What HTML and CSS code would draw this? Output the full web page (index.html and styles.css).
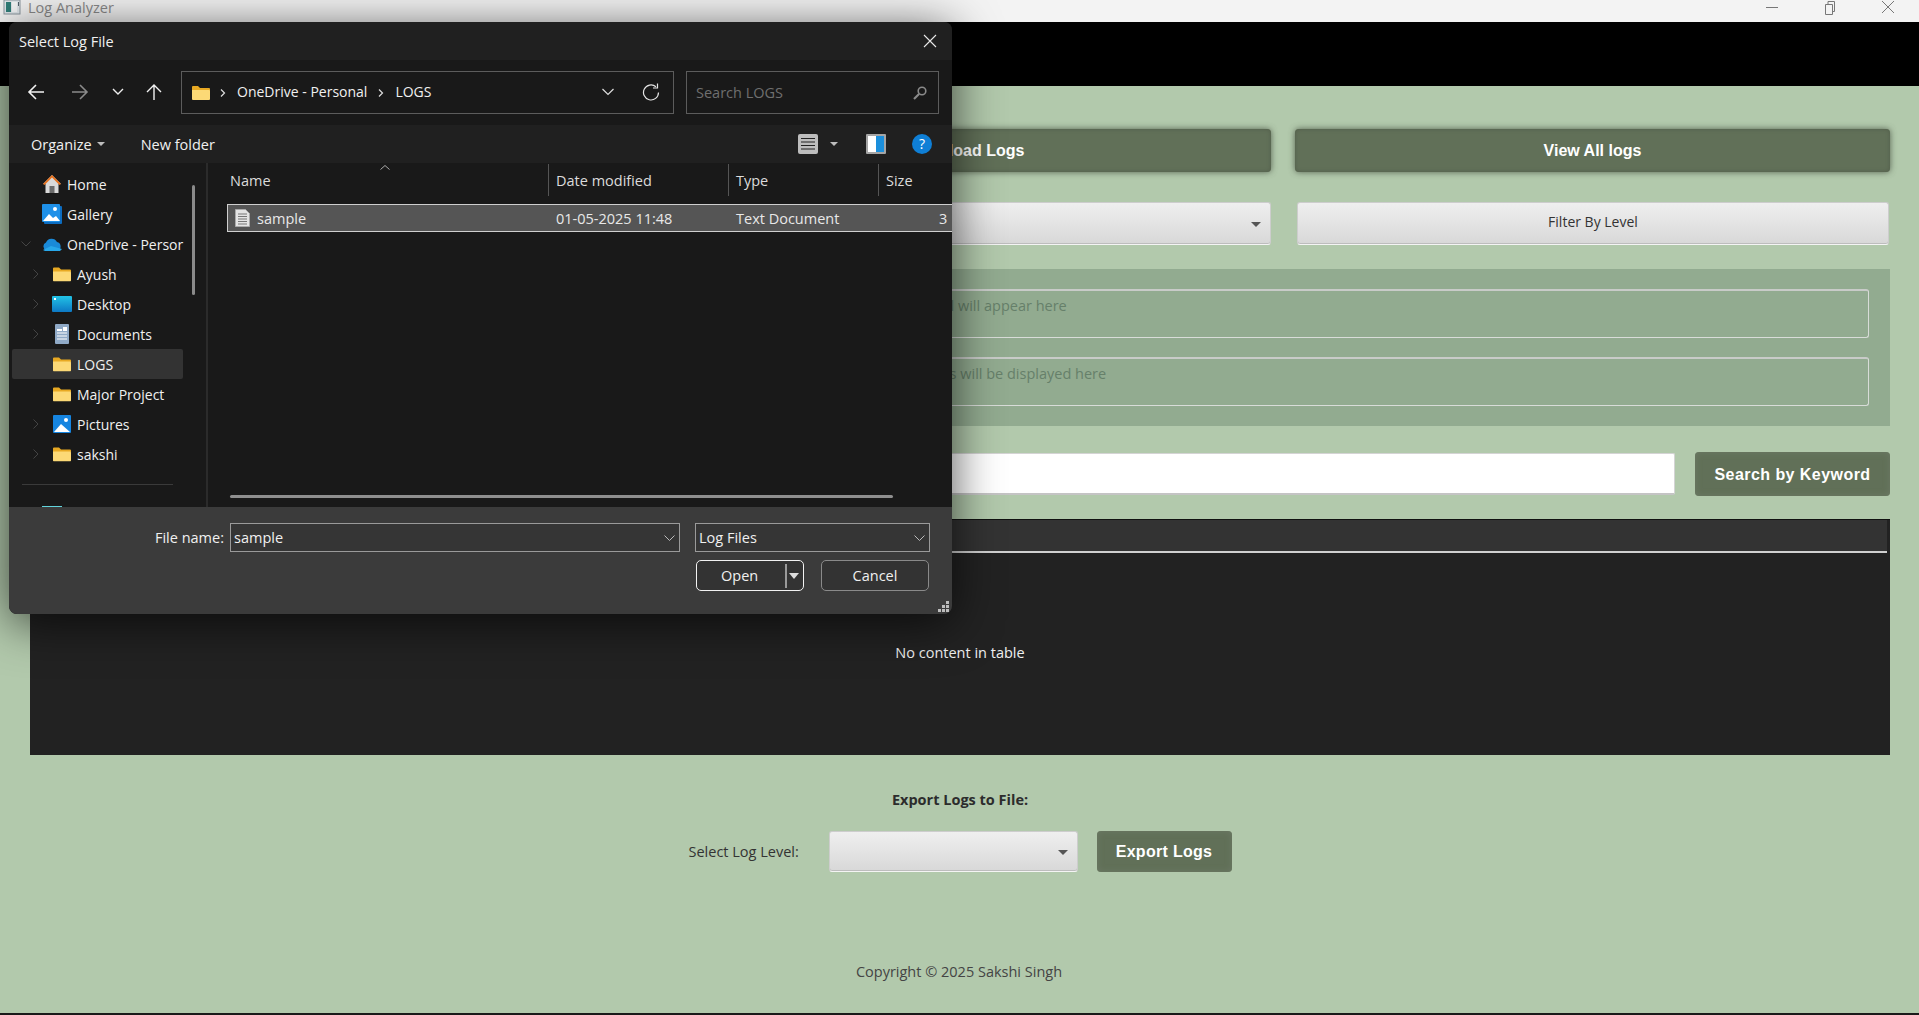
FILE: index.html
```html
<!DOCTYPE html>
<html lang="en">
<head>
    <meta charset="UTF-8">
    <title>Log Analyzer</title>
    <link rel="stylesheet" href="styles.css">
</head>
<body>
    <div class="titlebar">
        <svg class="app-icon" width="18" height="18" viewBox="0 0 18 18"><rect x="1" y="0" width="16" height="14" fill="#dfe6ea" stroke="#8c98a0"/><rect x="3" y="2" width="5" height="10" fill="#2f7d78"/><rect x="9" y="2" width="5" height="10" fill="#f4f6f7"/><rect x="15" y="2" width="1" height="4" fill="#51606a"/></svg>
        <span class="app-title">Log Analyzer</span>
        <div class="win-controls">
            <svg width="16" height="16" viewBox="0 0 16 16"><path d="M2 7.500h12" stroke="#777" fill="none"/></svg>
            <svg width="16" height="16" viewBox="0 0 16 16"><path d="M3.500 4.500h7v10h-7zM6 4.500v-3h6.500v10h-2" stroke="#777" fill="none"/></svg>
            <svg width="16" height="16" viewBox="0 0 16 16"><path d="M2 1l12 12M14 1L2 13" stroke="#777" fill="none"/></svg>
        </div>
    </div>
    <div class="app-header"></div>

    <main class="app-main">
        <div class="action-row">
            <button class="btn-dark"></button>
            <button class="btn-dark">Upload Logs</button>
            <button class="btn-dark">View All logs</button>
        </div>
        <div class="filter-row">
            <div class="combo"><span class="combo-arrow"></span></div>
            <button class="btn-light">Filter By Level</button>
        </div>
        <section class="output-panel">
            <div class="output-box">Detail will appear here</div>
            <div class="output-box">Errors will be displayed here</div>
        </section>
        <div class="search-row">
            <input class="search-input" type="text">
            <button class="btn-dark btn-search">Search by Keyword</button>
        </div>
        <section class="log-table">
            <div class="log-table-head"></div>
            <div class="log-table-body">No content in table</div>
        </section>
        <h3 class="export-title">Export Logs to File:</h3>
        <div class="export-row">
            <span class="export-label">Select Log Level:</span>
            <div class="combo combo-small"><span class="combo-arrow"></span></div>
            <button class="btn-dark btn-export">Export Logs</button>
        </div>
        <footer class="copyright">Copyright © 2025 Sakshi Singh</footer>
    </main>
    <div class="bottom-edge"></div>

    <!-- file picker lying over the app -->
    <div class="dialog">
        <div class="dlg-title">
            <span>Select Log File</span>
            <svg width="14" height="14" viewBox="0 0 14 14"><path d="M1 1l12 12M13 1L1 13" stroke="#e8e8e8" stroke-width="1.100" fill="none"/></svg>
        </div>

        <div class="dlg-nav">
            <div class="nav-buttons">
                <svg class="nav-back" width="18" height="18" viewBox="0 0 18 18"><path d="M17 9H2M9 2L2 9l7 7" stroke="#f2f2f2" stroke-width="1.600" fill="none"/></svg>
                <svg class="nav-fwd" width="18" height="18" viewBox="0 0 18 18"><path d="M1 9h15M9 2l7 7-7 7" stroke="#8a8a8a" stroke-width="1.600" fill="none"/></svg>
                <svg class="nav-recent" width="12" height="8" viewBox="0 0 12 8"><path d="M1 1l5 5 5-5" stroke="#eee" stroke-width="1.400" fill="none"/></svg>
                <svg class="nav-up" width="16" height="18" viewBox="0 0 16 18"><path d="M8 17V2M1 9l7-7 7 7" stroke="#f2f2f2" stroke-width="1.400" fill="none"/></svg>
            </div>
            <div class="address">
                <svg class="folder" width="18" height="15" viewBox="0 0 18 15"><use href="#folder"/></svg>
                <svg class="crumb" width="6" height="8" viewBox="0 0 6 8"><path d="M1 0.500l3.500 3.500-3.500 3.500" stroke="#ddd" stroke-width="1.200" fill="none"/></svg>
                <span>OneDrive - Personal</span>
                <svg class="crumb" width="6" height="8" viewBox="0 0 6 8"><path d="M1 0.500l3.500 3.500-3.500 3.500" stroke="#ddd" stroke-width="1.200" fill="none"/></svg>
                <span>LOGS</span>
                <svg class="addr-drop" width="12" height="8" viewBox="0 0 12 8"><path d="M0.500 1l5.500 5.500L11.500 1" stroke="#ddd" stroke-width="1.200" fill="none"/></svg>
                <svg class="addr-refresh" width="18" height="18" viewBox="0 0 18 18"><path d="M16.500 9.500a7.500 7.500 0 1 1-2.600-5.700" stroke="#e6e6e6" stroke-width="1.200" fill="none"/><path d="M15.500 0.500v4.500h-4.500" stroke="#e6e6e6" stroke-width="1.200" fill="none"/></svg>
            </div>
            <div class="search-box">
                <span>Search LOGS</span>
                <svg width="14" height="14" viewBox="0 0 14 14"><circle cx="9" cy="5" r="3.800" stroke="#8a8a8a" stroke-width="1.600" fill="none"/><path d="M6 8l-5 5" stroke="#8a8a8a" stroke-width="2.200"/></svg>
            </div>
        </div>

        <div class="dlg-toolbar">
            <span class="tool-item">Organize<i class="caret"></i></span>
            <span class="tool-item tool-new">New folder</span>
            <div class="tool-right">
                <svg width="20" height="20" viewBox="0 0 20 20"><rect width="20" height="20" rx="2" fill="#bdbdbd"/><path d="M3 4.500h14M3 8h14M3 11.500h14M3 15h14" stroke="#222" stroke-width="1.200"/></svg>
                <i class="caret"></i>
                <svg class="tool-pane" width="20" height="20" viewBox="0 0 20 20"><rect width="20" height="20" rx="1" fill="#a5a5a5"/><rect x="2" y="2" width="8" height="16" fill="#fff"/><rect x="10" y="2" width="8" height="16" fill="#1b8fdc"/></svg>
                <svg class="tool-help" width="20" height="20" viewBox="0 0 20 20"><circle cx="10" cy="10" r="10" fill="#0f7fd6"/><text x="10" y="15" text-anchor="middle" class="help-mark">?</text></svg>
            </div>
        </div>

        <div class="dlg-body">
            <aside class="tree">
                <div class="tree-row"><svg class="tree-icon" width="20" height="20" viewBox="0 0 20 20"><path d="M10 1L1 10h2.500v9h13v-9H19z" fill="#d9d9d9"/><path d="M10 1L1 10l1.500 1L10 3.500 17.500 11l1.500-1z" fill="#e8711c"/><rect x="7.500" y="12" width="5" height="7" fill="#6b6b6b"/></svg>Home</div>
                <div class="tree-row"><svg class="tree-icon" width="20" height="20" viewBox="0 0 20 20"><rect x="2" y="2" width="18" height="18" rx="1" fill="#0c6cc0"/><rect width="18" height="18" rx="1" fill="#1e90e8"/><path d="M1 17l6-7 4 4 3-2 4 5z" fill="#fff"/><circle cx="13" cy="5" r="2" fill="#fff"/></svg>Gallery</div>
                <div class="tree-row"><svg class="tree-chev" width="10" height="6" viewBox="0 0 10 6"><path d="M0.500 0.500L5 5l4.500-4.500" stroke="#444" fill="none"/></svg><svg class="tree-icon" width="20" height="14" viewBox="0 0 20 14"><path d="M4 13a4 4 0 0 1 0-7.500A6 6 0 0 1 15 5a4.500 4.500 0 0 1 1 8.500z" fill="#1a8ad8"/><path d="M1 13l8-4 11 3-2 2H3z" fill="#28a8ea"/></svg>OneDrive - Persor</div>
                <div class="tree-row tree-sub"><svg class="tree-arrow" width="6" height="10" viewBox="0 0 6 10"><path d="M0.500 0.500L5 5 0.500 9.500" stroke="#444" fill="none"/></svg><svg class="tree-icon" width="18" height="15" viewBox="0 0 18 15"><use href="#folder"/></svg>Ayush</div>
                <div class="tree-row tree-sub"><svg class="tree-arrow" width="6" height="10" viewBox="0 0 6 10"><path d="M0.500 0.500L5 5 0.500 9.500" stroke="#444" fill="none"/></svg><svg class="tree-icon tree-wide" width="20" height="16" viewBox="0 0 20 16"><defs><linearGradient id="desk" x1="0" y1="0" x2="0" y2="1"><stop offset="0" stop-color="#22c3e6"/><stop offset="1" stop-color="#0d78c4"/></linearGradient></defs><rect width="20" height="16" rx="1" fill="url(#desk)"/><rect x="2" y="2" width="2" height="2" fill="#fff"/></svg>Desktop</div>
                <div class="tree-row tree-sub"><svg class="tree-arrow" width="6" height="10" viewBox="0 0 6 10"><path d="M0.500 0.500L5 5 0.500 9.500" stroke="#444" fill="none"/></svg><svg class="tree-icon" width="18" height="20" viewBox="0 0 18 20"><rect x="2" width="14" height="20" rx="1" fill="#8fa9c6"/><path d="M4 9h10M4 12h10M4 15h10" stroke="#fff"/><rect x="4" y="5" width="5" height="2" fill="#fff"/><rect x="10" y="3" width="4" height="4" fill="#fff"/></svg>Documents</div>
                <div class="tree-row tree-sub tree-selected"><svg class="tree-icon" width="18" height="15" viewBox="0 0 18 15"><use href="#folder"/></svg>LOGS</div>
                <div class="tree-row tree-sub"><svg class="tree-icon" width="18" height="15" viewBox="0 0 18 15"><use href="#folder"/></svg>Major Project</div>
                <div class="tree-row tree-sub"><svg class="tree-arrow" width="6" height="10" viewBox="0 0 6 10"><path d="M0.500 0.500L5 5 0.500 9.500" stroke="#444" fill="none"/></svg><svg class="tree-icon" width="18" height="18" viewBox="0 0 18 18"><rect width="18" height="18" rx="1" fill="#1685e0"/><path d="M1 17l7-8 9 8z" fill="#fff"/><circle cx="13" cy="5" r="2" fill="#fff"/></svg>Pictures</div>
                <div class="tree-row tree-sub"><svg class="tree-arrow" width="6" height="10" viewBox="0 0 6 10"><path d="M0.500 0.500L5 5 0.500 9.500" stroke="#444" fill="none"/></svg><svg class="tree-icon" width="18" height="15" viewBox="0 0 18 15"><use href="#folder"/></svg>sakshi</div>
                <div class="tree-divider"></div>
                <div class="tree-peek"></div>
                <div class="tree-scroll"></div>
            </aside>
            <div class="files">
                <svg class="sort-mark" width="10" height="5" viewBox="0 0 10 5"><path d="M0.500 4.500L5 0.500l4.500 4" stroke="#aaa" fill="none"/></svg>
                <div class="files-head">
                    <span class="col-name">Name</span>
                    <span class="col-date">Date modified</span>
                    <span class="col-type">Type</span>
                    <span class="col-size">Size</span>
                </div>
                <div class="file-row">
                    <span class="col-name"><svg width="15" height="18" viewBox="0 0 15 18"><path d="M0.500 0.500h10l4 4v13h-14z" fill="#e4e4e4" stroke="#aaa"/><path d="M3 5h9M3 7.500h9M3 10h9M3 12.500h9M3 15h9" stroke="#777"/></svg>sample</span>
                    <span class="col-date">01-05-2025 11:48</span>
                    <span class="col-type">Text Document</span>
                    <span class="col-size">3</span>
                </div>
                <div class="h-scroll"></div>
            </div>
        </div>

        <div class="dlg-footer">
            <div class="footer-row">
                <label class="name-label">File name:</label>
                <div class="field field-name">sample<svg width="11" height="6" viewBox="0 0 11 6"><path d="M0.500 0.500l5 5 5-5" stroke="#bbb" fill="none"/></svg></div>
                <div class="field field-type">Log Files<svg width="11" height="6" viewBox="0 0 11 6"><path d="M0.500 0.500l5 5 5-5" stroke="#bbb" fill="none"/></svg></div>
            </div>
            <div class="footer-buttons">
                <div class="dlg-btn dlg-open"><span class="open-text">Open</span><span class="open-split"></span><i class="caret caret-open"></i></div>
                <div class="dlg-btn dlg-cancel">Cancel</div>
            </div>
            <svg class="grip" width="11" height="11" viewBox="0 0 11 11"><path d="M8 0h3v3H8zM4 4h3v3H4zM8 4h3v3H8zM0 8h3v3H0zM4 8h3v3H4zM8 8h3v3H8z" fill="#bdbdbd"/></svg>
        </div>
    </div>

    <svg width="0" height="0" class="defs">
        <defs>
            <g id="folder">
                <path d="M0 2a1 1 0 0 1 1-1h5l2 2h9a1 1 0 0 1 1 1v2H0z" fill="#e8a923"/>
                <path d="M0 5h17a1 1 0 0 1 1 1v8a1 1 0 0 1-1 1H1a1 1 0 0 1-1-1z" fill="#fcd976"/>
            </g>
        </defs>
    </svg>
</body>
</html>
```

FILE: styles.css
```css
* {
    box-sizing: border-box;
}
html, body {
    height: 100%;
}
body {
    margin: 0;
    overflow: hidden;
    position: relative;
    background-color: #b2c9ac;
    font-family: "Open Sans", "Noto Sans", sans-serif;
    font-size: 14px;
    color: #333;
}
.defs {
    position: absolute;
}

/* app window */
.titlebar {
    height: 22px;
    background-color: #f3f3f3;
    display: flex;
    align-items: flex-start;
    padding-left: 3px;
}
.app-title {
    margin-left: 7px;
    line-height: 15px;
    color: #8a8a8a;
    font-size: 14.5px;
}
.win-controls {
    margin-left: auto;
    display: flex;
    gap: 42px;
    padding-right: 23px;
}
.app-header {
    height: 64px;
    background-color: #000;
}
.app-main {
    padding: 43px 29px 0 30px;
}
.action-row {
    display: grid;
    grid-template-columns: 1fr 590px 595px;
    gap: 24px;
}
.btn-dark {
    height: 43px;
    border: 0;
    border-radius: 4px;
    background-color: #617058;
    color: #fff;
    font-family: "Liberation Sans", Arial, sans-serif;
    font-weight: bold;
    font-size: 16px;
    box-shadow: inset 0 0 4px #525d4b, 0 0 6px rgba(60, 70, 55, 0.8);
}
.filter-row {
    display: grid;
    grid-template-columns: 1fr 592px;
    gap: 26px;
    margin-top: 30px;
    padding-right: 1px;
}
.combo {
    height: 43px;
    position: relative;
    border-radius: 3px;
    border: 1px solid #cdcdcd;
    border-bottom-color: #f4f4f4;
    background: linear-gradient(#efefef, #d8d8d8);
    box-shadow: inset 0 -1px 0 #bdbdbd;
}
.combo-arrow {
    position: absolute;
    right: 9px;
    top: 50%;
    margin-top: -2px;
    border-left: 5px solid transparent;
    border-right: 5px solid transparent;
    border-top: 5px solid #555;
}
.btn-light {
    height: 43px;
    padding: 0 0 4px;
    border-radius: 3px;
    border: 1px solid #cdcdcd;
    border-bottom-color: #f4f4f4;
    background: linear-gradient(#efefef, #d8d8d8);
    box-shadow: inset 0 -1px 0 #bdbdbd;
    font-family: "Open Sans", sans-serif;
    font-size: 14px;
    color: #333;
}
.output-panel {
    margin-top: 24px;
    height: 157px;
    background-color: #92ab90;
    padding: 20px 21px 20px 878px;
    display: flex;
    flex-direction: column;
    gap: 19px;
}
.output-box {
    height: 49px;
    padding: 5px 6px;
    border: 1px solid #d8dcd8;
    border-top: 2px solid #c8cbc8;
    border-radius: 3px;
    color: #66806a;
    font-size: 14.5px;
}
.search-row {
    display: flex;
    justify-content: flex-end;
    align-items: center;
    gap: 20px;
    margin-top: 26px;
}
.search-input {
    flex: 1;
    height: 42px;
    background-color: #fff;
    border: 1px solid #d4d4d4;
    border-bottom: 2px solid #c4c4c4;
    border-radius: 2px;
}
.btn-search {
    width: 195px;
    height: 44px;
    padding: 2px 0 0;
    letter-spacing: 0.45px;
    box-shadow: inset 0 0 6px #6d7a66;
}
.log-table {
    margin-top: 23px;
    height: 236px;
    background-color: #222;
    border-top: 1px solid #111;
    display: flex;
    flex-direction: column;
}
.log-table-head {
    height: 33px;
    margin-right: 3px;
    background-color: #333;
    border-bottom: 2px solid #d0d0d0;
}
.log-table-body {
    flex: 1;
    display: flex;
    align-items: center;
    justify-content: center;
    padding-bottom: 3px;
    color: #f0f0f0;
    font-size: 14.5px;
}
.export-title {
    margin: 35px 0 0;
    text-align: center;
    font-size: 14.5px;
    font-weight: bold;
    color: #2c2c2c;
}
.export-row {
    display: flex;
    justify-content: center;
    align-items: center;
    margin-top: 22px;
}
.export-label {
    width: 140px;
    font-size: 14.5px;
}
.combo-small {
    width: 249px;
    height: 41px;
}
.btn-export {
    width: 135px;
    height: 41px;
    margin-left: 19px;
    letter-spacing: 0.3px;
    box-shadow: inset 0 0 6px #6d7a66;
}
.copyright {
    margin-top: 90px;
    padding-right: 2px;
    text-align: center;
    font-size: 14.5px;
    color: #444;
}
.bottom-edge {
    position: absolute;
    left: 0;
    right: 0;
    bottom: 0;
    height: 2px;
    background-color: #1a1a1a;
}

/* file dialog */
.dialog {
    position: absolute;
    left: 9px;
    top: 22px;
    width: 943px;
    height: 592px;
    border-radius: 8px;
    background-color: #191919;
    color: #f0f0f0;
    font-size: 14.5px;
    display: flex;
    flex-direction: column;
    box-shadow: 0 8px 48px rgba(0, 0, 0, 0.68);
}
.dlg-title {
    height: 38px;
    flex: none;
    background-color: #202020;
    border-radius: 8px 8px 0 0;
    display: flex;
    align-items: center;
    justify-content: space-between;
    padding: 0 15px 0 10px;
}
.dlg-nav {
    height: 65px;
    flex: none;
    background-color: #191919;
    position: relative;
    display: flex;
    align-items: center;
    padding-left: 160px;
    gap: 12px;
}
.nav-buttons svg {
    position: absolute;
}
.nav-back { left: 18px; top: 23px; }
.nav-fwd { left: 62px; top: 23px; }
.nav-recent { left: 103px; top: 28px; }
.nav-up { left: 137px; top: 23px; }
.address {
    width: 493px;
    height: 43px;
    border: 1px solid #5c5c5c;
    display: flex;
    align-items: center;
    padding: 0 0 2px 10px;
    position: relative;
    font-size: 14px;
}
.address .folder {
    margin: 2px 10px 0 0;
}
.address .crumb {
    margin: 2px 11px 0 0;
}
.address span {
    margin-right: 11px;
}
.addr-drop {
    position: absolute;
    left: 420px;
    top: 16px;
}
.addr-refresh {
    position: absolute;
    left: 460px;
    top: 11px;
}
.search-box {
    width: 253px;
    height: 43px;
    border: 1px solid #5c5c5c;
    display: flex;
    align-items: center;
    justify-content: space-between;
    padding: 0 11px 0 9px;
    color: #6f6f6f;
}
.dlg-toolbar {
    height: 38px;
    flex: none;
    background-color: #202020;
    display: flex;
    align-items: center;
    padding-left: 22px;
}
.tool-item {
    display: inline-flex;
    align-items: center;
}
.tool-new {
    margin-left: 36px;
}
.caret {
    display: inline-block;
    border-left: 4px solid transparent;
    border-right: 4px solid transparent;
    border-top: 4px solid #bdbdbd;
    margin-left: 5px;
}
.tool-right {
    margin-left: auto;
    display: flex;
    align-items: center;
    padding-right: 20px;
}
.tool-right .caret {
    margin-left: 12px;
}
.tool-pane {
    margin-left: 28px;
}
.tool-help {
    margin-left: 26px;
}
.help-mark {
    fill: #fff;
    font-family: "Open Sans", sans-serif;
    font-size: 14px;
}
.dlg-body {
    height: 344px;
    flex: none;
    display: flex;
    overflow: hidden;
    background-color: #191919;
}
.tree {
    position: relative;
    flex: none;
    width: 199px;
    padding: 6px 0 0 3px;
    border-right: 2px solid #2b2b2b;
    font-size: 14px;
}
.tree-row {
    position: relative;
    height: 30px;
    width: 171px;
    display: flex;
    align-items: center;
    padding-left: 55px;
    white-space: nowrap;
}
.tree-sub {
    padding-left: 65px;
}
.tree-selected {
    background-color: #333;
    border-radius: 2px;
}
.tree-icon {
    position: absolute;
    left: 30px;
    top: 50%;
    transform: translateY(-50%);
}
.tree-sub .tree-icon {
    left: 41px;
}
.tree-sub .tree-wide {
    left: 40px;
}
.tree-arrow {
    position: absolute;
    left: 21px;
    top: 10px;
}
.tree-chev {
    position: absolute;
    left: 9px;
    top: 12px;
}
.tree-divider {
    margin: 15px 0 0 10px;
    width: 151px;
    height: 1px;
    background-color: #3a3a3a;
}
.tree-peek {
    position: absolute;
    left: 33px;
    bottom: 0;
    width: 20px;
    height: 1px;
    background-color: #62d4dc;
}
.tree-scroll {
    position: absolute;
    left: 183px;
    top: 22px;
    width: 3px;
    height: 110px;
    border-radius: 2px;
    background-color: #8a8a8a;
}
.files {
    position: relative;
    flex: 1;
    min-width: 0;
    overflow: hidden;
}
.sort-mark {
    position: absolute;
    left: 172px;
    top: 2px;
}
.files-head {
    height: 41px;
    display: flex;
    align-items: flex-start;
    color: #dcdcdc;
}
.files-head span {
    margin-top: 1px;
    height: 32px;
    display: flex;
    align-items: center;
}
.files-head .col-date, .files-head .col-type, .files-head .col-size {
    border-left: 1px solid #555;
}
.col-name {
    width: 340px;
    flex: none;
    padding-left: 22px;
}
.col-date {
    width: 180px;
    flex: none;
    padding-left: 7px;
}
.col-type {
    width: 150px;
    flex: none;
    padding-left: 7px;
}
.col-size {
    flex: none;
    width: 70px;
    padding-left: 7px;
}
.file-row {
    margin-left: 19px;
    height: 28px;
    width: 730px;
    background-color: #555;
    border: 1px solid #cfcfcf;
    display: flex;
    align-items: center;
    color: #e8e8e8;
}
.file-row .col-name {
    width: 314px;
    padding-left: 7px;
    display: flex;
    align-items: center;
    gap: 7px;
}
.file-row .col-date {
    width: 194px;
    padding-left: 14px;
}
.file-row .col-type {
    width: 203px;
    padding-left: 0;
}
.file-row .col-size {
    padding-left: 0;
}
.h-scroll {
    position: absolute;
    left: 22px;
    top: 332px;
    width: 663px;
    height: 3px;
    border-radius: 2px;
    background-color: #8f8f8f;
}
.dlg-footer {
    position: relative;
    flex: 1;
    background-color: #3b3b3b;
    border-radius: 0 0 8px 8px;
    padding-top: 16px;
}
.footer-row {
    display: flex;
    align-items: center;
}
.name-label {
    width: 221px;
    text-align: right;
    padding-right: 6px;
}
.field {
    height: 29px;
    background-color: #353535;
    border: 1px solid #9a9a9a;
    display: flex;
    align-items: center;
    justify-content: space-between;
    padding: 0 4px 0 3px;
}
.field-name {
    width: 450px;
}
.field-type {
    width: 235px;
    margin-left: 15px;
}
.footer-buttons {
    display: flex;
    gap: 17px;
    margin: 8px 0 0 687px;
}
.dlg-btn {
    position: relative;
    width: 108px;
    height: 31px;
    background-color: #333;
    border-radius: 5px;
    display: flex;
    align-items: center;
    justify-content: center;
}
.dlg-open {
    border: 1px solid #f2f2f2;
    justify-content: flex-start;
    padding-left: 24px;
}
.open-split {
    position: absolute;
    left: 88px;
    top: 3px;
    width: 2px;
    height: 24px;
    background-color: #9a9a9a;
}
.caret-open {
    position: absolute;
    left: 92px;
    top: 12px;
    margin: 0;
    border-left-width: 5px;
    border-right-width: 5px;
    border-top: 6px solid #ddd;
}
.dlg-cancel {
    border: 1px solid #8a8a8a;
}
.grip {
    position: absolute;
    right: 3px;
    bottom: 2px;
}
```
